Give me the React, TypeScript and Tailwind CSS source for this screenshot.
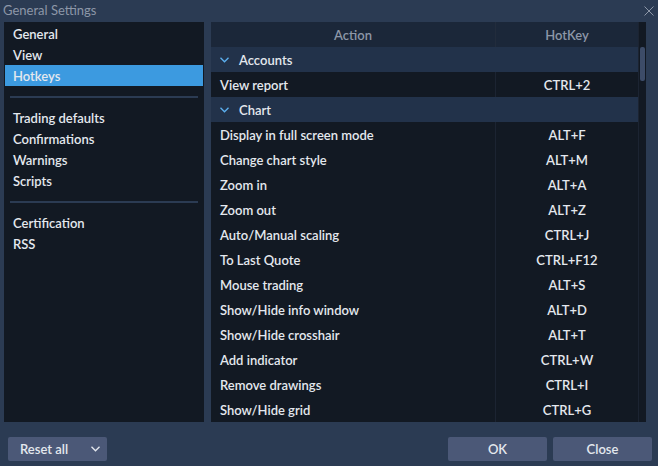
import React from 'react';

type Row = { group?: string; action?: string; key?: string };

const rows: Row[] = [
  { group: 'Accounts' },
  { action: 'View report', key: 'CTRL+2' },
  { group: 'Chart' },
  { action: 'Display in full screen mode', key: 'ALT+F' },
  { action: 'Change chart style', key: 'ALT+M' },
  { action: 'Zoom in', key: 'ALT+A' },
  { action: 'Zoom out', key: 'ALT+Z' },
  { action: 'Auto/Manual scaling', key: 'CTRL+J' },
  { action: 'To Last Quote', key: 'CTRL+F12' },
  { action: 'Mouse trading', key: 'ALT+S' },
  { action: 'Show/Hide info window', key: 'ALT+D' },
  { action: 'Show/Hide crosshair', key: 'ALT+T' },
  { action: 'Add indicator', key: 'CTRL+W' },
  { action: 'Remove drawings', key: 'CTRL+I' },
  { action: 'Show/Hide grid', key: 'CTRL+G' },
];

const menu: (string | null)[] = [
  'General',
  'View',
  'Hotkeys',
  null,
  'Trading defaults',
  'Confirmations',
  'Warnings',
  'Scripts',
  null,
  'Certification',
  'RSS',
];

const Chevron = ({ className = '' }: { className?: string }) => (
  <svg width="9" height="6" viewBox="0 0 9 6" className={className}>
    <path d="M0.5 0.8 L4.5 4.8 L8.5 0.8" fill="none" stroke="currentColor" strokeWidth="1.3" />
  </svg>
);

export default function App() {
  return (
    <div
      className="w-[658px] h-[466px] bg-[#2b3b53] flex flex-col text-[13px] text-[#e4e8ee] overflow-hidden"
      style={{ fontFamily: 'Lato, "Noto Sans", sans-serif' }}
    >
      {/* title bar */}
      <div className="h-[22px] flex items-center justify-between pl-[3px] pr-[4px]">
        <span className="text-[#8d97a8] text-[13px]">General Settings</span>
        <svg width="10" height="10" viewBox="0 0 10 10" className="text-[#8d97a8]">
          <path d="M0.5 0.5 L9.5 9.5 M9.5 0.5 L0.5 9.5" stroke="currentColor" strokeWidth="1" />
        </svg>
      </div>

      <div className="flex h-[400px] pl-[4px] gap-[7px]">
        {/* sidebar */}
        <div className="w-[200px] bg-[#121923] px-[1px] pt-[1px] font-semibold">
          {menu.map((m, i) =>
            m === null ? (
              <div key={i} className="h-[21px] flex items-center px-[5px]">
                <div className="h-[2px] w-full bg-[#2b3b53]" />
              </div>
            ) : (
              <div
                key={i}
                className={`h-[21px] flex items-center pl-[8px] pt-[2px] ${m === 'Hotkeys' ? 'bg-[#3c9ae0]' : ''}`}
              >
                {m}
              </div>
            )
          )}
        </div>

        {/* table */}
        <div className="w-[435px] bg-[#121923] flex">
          <div className="flex-1 flex flex-col">
            <div className="h-[25px] flex bg-[#1b2739] text-[#8d97a8] font-semibold">
              <div className="w-[285px] flex items-center justify-center pt-[2px] border-r border-[#222c3c]">Action</div>
              <div className="flex-1 flex items-center justify-center pt-[2px]">HotKey</div>
            </div>
            {rows.map((r, i) =>
              r.group ? (
                <div key={i} className="h-[25px] flex items-center bg-[#22324a] font-semibold">
                  <Chevron className="ml-[9px] mr-[10px] text-[#5cb0f0]" />
                  <span className="pt-[2px]">{r.group}</span>
                </div>
              ) : (
                <div key={i} className="h-[25px] flex font-semibold">
                  <div className="w-[285px] flex items-center pl-[9px] pt-[2px] border-r border-[#1c2432]">{r.action}</div>
                  <div className="flex-1 flex items-center justify-center pt-[2px]">{r.key}</div>
                </div>
              )
            )}
          </div>
          <div className="w-[8px] border-l border-[#1c2432] relative">
            <div className="absolute left-[1px] top-[25px] w-[5px] h-[34px] rounded-[2px] bg-[#3d4c68]" />
          </div>
        </div>
      </div>

      {/* footer */}
      <div className="flex-1 flex items-start pt-[15px] pl-[8px] pr-[6px] font-semibold">
        <button className="w-[99px] h-[24px] bg-[#4b5877] rounded-[2px] flex items-center justify-between pl-[12px] pr-[7px]">
          <span className="pt-[2px]">Reset all</span>
          <Chevron className="text-[#e4e8ee]" />
        </button>
        <div className="ml-auto flex gap-[6px]">
          <button className="w-[99px] h-[24px] bg-[#4b5877] rounded-[2px] pt-[2px]">OK</button>
          <button className="w-[99px] h-[24px] bg-[#4b5877] rounded-[2px] pt-[2px]">Close</button>
        </div>
      </div>
    </div>
  );
}
